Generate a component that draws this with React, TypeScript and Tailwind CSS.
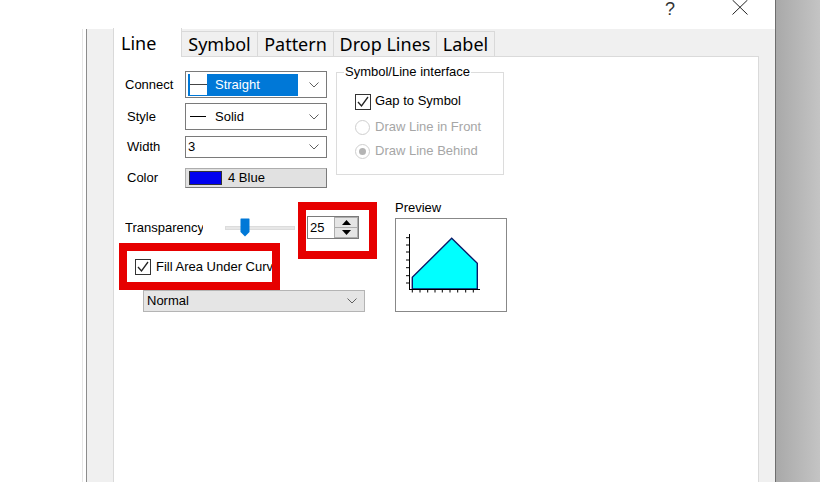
import React from 'react';

const UI = { fontFamily: '"Liberation Sans", Arial, sans-serif' };
const TAB = { fontFamily: '"Noto Sans", "Open Sans", sans-serif' };

function Chevron() {
  return (
    <svg width="10" height="6" viewBox="0 0 10 6" className="shrink-0">
      <polyline points="0.5,0.5 5,5 9.5,0.5" fill="none" stroke="#606060" strokeWidth="1" />
    </svg>
  );
}

function Check() {
  return (
    <div className="flex h-[16px] w-[16px] shrink-0 items-center justify-center border border-[#333] bg-white">
      <svg width="14" height="14" viewBox="0 0 14 14">
        <polyline points="2,7 5.5,11 12,2" fill="none" stroke="#222" strokeWidth="1.3" />
      </svg>
    </div>
  );
}

function Radio({ on }: { on?: boolean }) {
  return (
    <div className="flex h-[15px] w-[15px] shrink-0 items-center justify-center rounded-full border border-[#cfcfcf] bg-white">
      {on && <div className="h-[7px] w-[7px] rounded-full bg-[#b4b4b4]" />}
    </div>
  );
}

function Combo({ children, h }: { children: React.ReactNode; h: string }) {
  return (
    <div className={`flex w-[142px] items-center justify-between border border-[#7a7a7a] bg-white pr-[7px] ${h}`}>
      <div className="flex h-full items-center">{children}</div>
      <Chevron />
    </div>
  );
}

function Preview() {
  const yt = [18.7, 26, 33, 41, 48.7, 56.7, 64];
  const xt = [16.3, 24, 31.7, 39, 46.3, 54, 61.7, 69.7, 77.3];
  return (
    <svg width="110" height="92" viewBox="0 0 110 92">
      <polygon points="16.3,70 16.3,58.3 55.7,19.3 81.3,44.3 81.3,70" fill="#00ffff" stroke="#0a1a6a" strokeWidth="1.4" />
      <line x1="13.5" y1="15" x2="13.5" y2="70.5" stroke="#000" strokeWidth="1" />
      <line x1="13" y1="70.5" x2="84" y2="70.5" stroke="#000" strokeWidth="1" />
      {yt.map((y) => (
        <line key={y} x1="10" y1={y} x2="13" y2={y} stroke="#000" strokeWidth="1" />
      ))}
      {xt.map((x) => (
        <line key={x} x1={x} y1="70" x2={x} y2="73.5" stroke="#000" strokeWidth="1" />
      ))}
    </svg>
  );
}

export default function App() {
  return (
    <div className="relative flex h-[482px] w-[820px] overflow-hidden bg-white text-[13px] text-black" style={UI}>
      <div className="flex w-[775px] shrink-0 flex-col">
        {/* title bar */}
        <div className="flex h-[29px] shrink-0 items-start justify-end pr-[27px]">
          <span className="text-[18px] font-light leading-none text-[#333]">?</span>
          <svg width="16" height="15" viewBox="0 0 16 15" className="ml-[57px]">
            <line x1="0.5" y1="0" x2="15.5" y2="14.5" stroke="#222" strokeWidth="1" />
            <line x1="15.5" y1="0" x2="0.5" y2="14.5" stroke="#222" strokeWidth="1" />
          </svg>
        </div>

        <div className="flex flex-1">
          <div className="w-[82px] shrink-0" />
          <div className="flex flex-1 border-l border-[#e6e6e6] pl-[3px]">
            <div className="flex flex-1 flex-col border-l border-[#8c8c8c] bg-[#f0f0f0] pl-[26px] pr-[16px]">
              {/* tabs */}
              <div className="flex h-[27px] shrink-0 items-end" style={TAB}>
                <div className="relative z-10 -mb-px flex h-[29px] w-[69px] items-center border-x border-[#d9d9d9] bg-white pl-[7px] text-[18px] leading-none">
                  Line
                </div>
                {[
                  ['Symbol', 'w-[76px]'],
                  ['Pattern', 'w-[76px]'],
                  ['Drop Lines', 'w-[103px]'],
                  ['Label', 'w-[58px]'],
                ].map(([t, w]) => (
                  <div
                    key={t}
                    className={`flex h-[25px] items-center justify-center border-r border-t border-[#d9d9d9] bg-[#f0f0f0] text-[18px] leading-none ${w}`}
                  >
                    {t}
                  </div>
                ))}
              </div>

              {/* tab page */}
              <div className="flex-1 border border-b-0 border-[#dadada] bg-white pl-[11px] pt-[7px]">
                <div className="flex items-start">
                  <div className="mt-[7px] flex w-[202px] flex-col">
                    <div className="flex h-[27px] items-center">
                      <span className="w-[60px]">Connect</span>
                      <Combo h="h-[27px]">
                        <div className="ml-[2px] flex h-[22px] w-[110px] items-center bg-[#0078d7] text-white">
                          <div className="ml-[2px] flex h-[21px] w-[17px] items-center bg-white">
                            <div className="h-px w-full bg-[#444]" />
                          </div>
                          <span className="ml-[8px]">Straight</span>
                        </div>
                      </Combo>
                    </div>
                    <div className="mt-[5px] flex h-[27px] items-center">
                      <span className="w-[60px] pl-[2px]">Style</span>
                      <Combo h="h-[27px]">
                        <div className="ml-[4px] h-px w-[16px] bg-black" />
                        <span className="ml-[9px]">Solid</span>
                      </Combo>
                    </div>
                    <div className="mt-[6px] flex h-[22px] items-center">
                      <span className="w-[60px] pl-[2px]">Width</span>
                      <Combo h="h-[22px]">
                        <span className="ml-[2px]">3</span>
                      </Combo>
                    </div>
                    <div className="mt-[10px] flex h-[20px] items-center">
                      <span className="w-[60px] pl-[2px]">Color</span>
                      <div className="flex h-[20px] w-[142px] items-center border border-[#adadad] border-r-[#7a7a7a] border-b-[#7a7a7a] bg-[#e1e1e1]">
                        <div className="ml-[3px] h-[14px] w-[33px] border border-[#333] bg-[#0000ee]" />
                        <span className="ml-[6px]">4 Blue</span>
                      </div>
                    </div>
                  </div>

                  <fieldset className="ml-[9px] h-[111px] w-[168px] border border-[#dcdcdc]">
                    <legend className="ml-[7px] px-[1px] leading-[16px]">Symbol/Line interface</legend>
                    <div className="flex flex-col pl-[18px] pt-[14px]">
                      <div className="flex h-[16px] items-center">
                        <Check />
                        <span className="ml-[4px] -mt-[3px]">Gap to Symbol</span>
                      </div>
                      <div className="mt-[9px] flex h-[16px] items-center text-[#a6a6a6]">
                        <Radio />
                        <span className="ml-[5px]">Draw Line in Front</span>
                      </div>
                      <div className="mt-[8px] flex h-[16px] items-center text-[#a6a6a6]">
                        <Radio on />
                        <span className="ml-[5px]">Draw Line Behind</span>
                      </div>
                    </div>
                  </fieldset>
                </div>

                <div className="mt-[12px] flex items-start">
                  <div className="flex w-[270px] flex-col">
                    <div className="mt-[16px] flex h-[23px] items-center">
                      <span className="w-[78px] shrink-0 overflow-hidden whitespace-nowrap">Transparency</span>
                      <div className="relative ml-[22px] flex h-[23px] w-[70px] items-center">
                        <div className="h-[4px] w-full border border-[#dcdcdc] bg-[#e7e7e7]" />
                        <svg width="10" height="19" viewBox="0 0 10 19" className="absolute left-[15px] top-[2px]">
                          <path d="M0.5 1 Q0.5 0.5 1 0.5 H9 Q9.5 0.5 9.5 1 V14 L5 18.5 L0.5 14 Z" fill="#0078d7" />
                        </svg>
                      </div>
                      <div className="ml-[12px] flex h-[23px] w-[52px] border border-[#7a7a7a] bg-white">
                        <span className="flex-1 pl-[2px] leading-[21px]">25</span>
                        <div className="flex w-[24px] flex-col">
                          <div className="flex h-[11px] items-center justify-center border border-[#adadad] bg-[#e5e5e5]">
                            <svg width="9" height="5" viewBox="0 0 9 5"><polygon points="0,5 4.5,0 9,5" fill="#000" /></svg>
                          </div>
                          <div className="flex h-[10px] items-center justify-center border border-t-0 border-[#adadad] bg-[#e5e5e5]">
                            <svg width="9" height="5" viewBox="0 0 9 5"><polygon points="0,0 9,0 4.5,5" fill="#000" /></svg>
                          </div>
                        </div>
                      </div>
                      <div className="ml-[10px] h-[2px] w-[2px] bg-black" />
                    </div>

                    <div className="mt-[19px] flex h-[17px] items-center pl-[10px]">
                      <Check />
                      <span className="ml-[5px] whitespace-nowrap">Fill Area Under Curv</span>
                    </div>

                    <div className="ml-[18px] mt-[15px] flex h-[22px] w-[222px] items-center justify-between border border-[#b4b4b4] bg-[#e5e5e5] pl-[3px] pr-[7px]">
                      <span>Normal</span>
                      <Chevron />
                    </div>
                  </div>

                  <div className="flex w-[112px] flex-col">
                    <span className="h-[16px] leading-[16px]">Preview</span>
                    <div className="mt-[2px] h-[94px] border border-[#888]">
                      <Preview />
                    </div>
                  </div>
                </div>
              </div>
            </div>
          </div>
        </div>
      </div>

      <div className="flex-1 border-l border-[#6e6e6e] bg-gradient-to-r from-[#a9a9a9] to-[#c4c4c4]" />

      {/* red annotation boxes */}
      <div className="absolute left-[298px] top-[202px] h-[57px] w-[79px] border-[8px] border-[#e60000]" />
      <div className="absolute left-[119px] top-[243px] h-[47px] w-[161px] border-[8px] border-[#e60000]" />
    </div>
  );
}
